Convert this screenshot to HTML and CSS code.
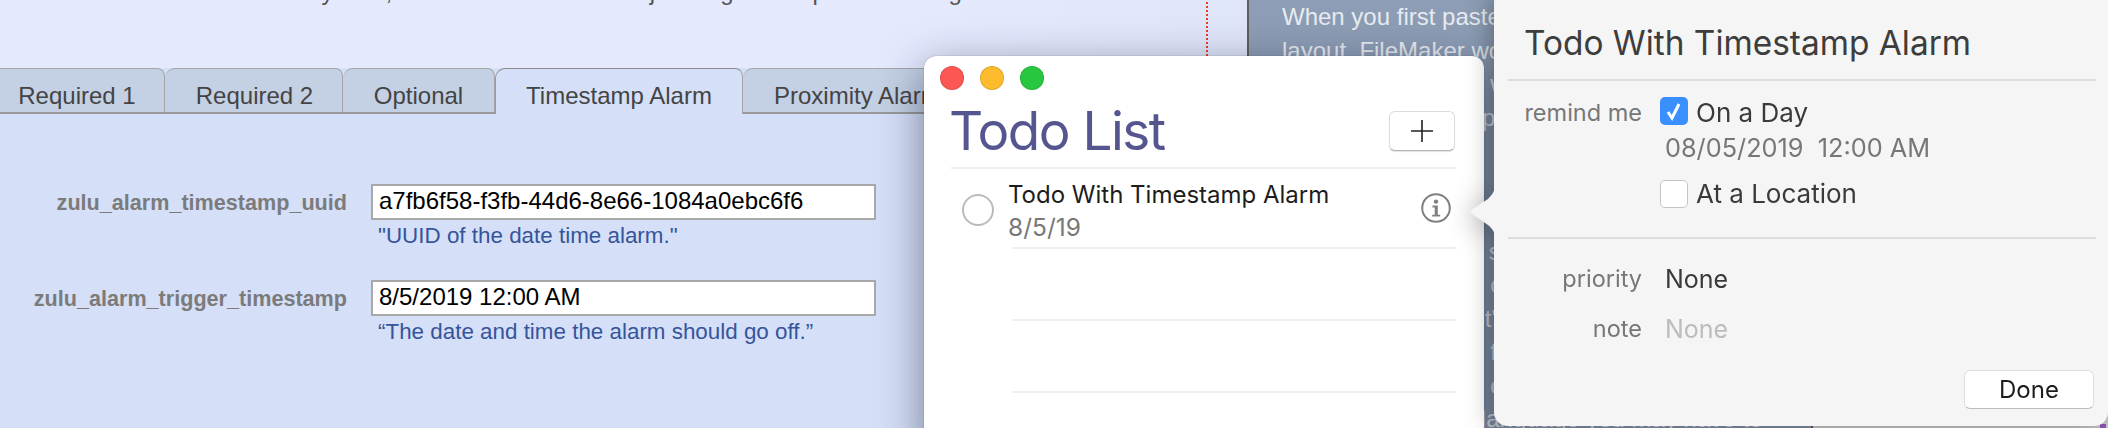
FILE: index.html
```html
<!DOCTYPE html>
<html lang="en">
<head>
<meta charset="utf-8">
<title>Todo With Timestamp Alarm</title>
<link rel="stylesheet" href="styles.css">
</head>
<body>
<div class="stage">
  <div class="doc">
    <div class="doc-top">
      <p class="intro">Fields below are used in the system, and tables for the main just to get a help from other guide</p>
      <span class="red-guide"></span>
    </div>
    <div class="tabs">
      <div class="tab tab-first">Required 1</div>
      <div class="tab tab-second">Required 2</div>
      <div class="tab tab-third">Optional</div>
      <div class="tab tab-active">Timestamp Alarm</div>
      <div class="tab tab-last">Proximity Alarm</div>
    </div>
    <div class="panel">
      <div class="field">
        <div class="field-label">zulu_alarm_timestamp_uuid</div>
        <div class="field-box">a7fb6f58-f3fb-44d6-8e66-1084a0ebc6f6</div>
        <div class="field-help">"UUID of the date time alarm."</div>
      </div>
      <div class="field">
        <div class="field-label">zulu_alarm_trigger_timestamp</div>
        <div class="field-box">8/5/2019 12:00 AM</div>
        <div class="field-help">“The date and time the alarm should go off.”</div>
      </div>
    </div>
  </div>

  <div class="side">
    <p class="side-line">When you first paste the script into your</p>
    <p class="side-line">layout, FileMaker would ask you which table</p>
    <p class="side-line">the table and fields with</p>
    <p class="side-line">it needs to show a part</p>
    <p class="side-line">of the alarm</p>
    <p class="side-line">and the list</p>
    <p class="side-line">on this page</p>
    <p class="side-line">to the table and for some</p>
    <p class="side-line">the table and fields can</p>
    <p class="side-line">those are in a script's</p>
    <p class="side-line">the table and fields for</p>
    <p class="side-line">the tables and field can</p>
    <p class="side-line">and set in another language you may have to</p>
    <span class="side-edge"></span>
    <span class="side-tail"></span>
    <span class="side-mark"></span>
  </div>

  <section class="window">
    <div class="lights">
      <span class="light light-red"></span>
      <span class="light light-yellow"></span>
      <span class="light light-green"></span>
    </div>
    <header class="win-head">
      <h1 class="win-title">Todo List</h1>
      <button class="add-btn" type="button" aria-label="Add">
        <svg class="add-icon" viewBox="0 0 22 22" width="22" height="22"><path d="M11 0v22M0 11h22" stroke="#222" stroke-width="1.6" fill="none"/></svg>
      </button>
    </header>
    <div class="todo">
      <span class="radio"></span>
      <div class="todo-text">
        <div class="todo-title">Todo With Timestamp Alarm</div>
        <div class="todo-date">8/5/19</div>
      </div>
      <svg class="info" viewBox="0 0 30 30" width="30" height="30">
        <circle cx="15" cy="15" r="13.8" fill="none" stroke="#808080" stroke-width="2"/>
        <circle cx="15" cy="8.6" r="2.2" fill="#808080"/>
        <path d="M11.5 12.6h5.3v9.2h2.4v1.8h-8v-1.8h2.5v-7.4h-2.2z" fill="#808080"/>
      </svg>
    </div>
    <div class="empty-row"></div>
    <div class="empty-row"></div>
  </section>

  <aside class="popover">
    <svg class="pop-arrow" viewBox="0 0 27 62" width="27" height="62">
      <path d="M27 0C27 9 24 14 19 19L2 30Q0 31 2 33L19 45C24 49 27 54 27 62Z" fill="#f5f5f5"/>
    </svg>
    <h2 class="pop-title">Todo With Timestamp Alarm</h2>
    <div class="pop-remind">
      <div class="pop-label">remind me</div>
      <div class="pop-options">
        <div class="check-row">
          <span class="check check-on">
            <svg viewBox="0 0 28 28" width="28" height="28"><path d="M8 15l4 6 7-14" fill="none" stroke="#fff" stroke-width="3"/></svg>
          </span>
          <span class="check-text">On a Day</span>
        </div>
        <div class="pop-date">08/05/2019&nbsp; 12:00 AM</div>
        <div class="check-row check-row-b">
          <span class="check"></span>
          <span>At a Location</span>
        </div>
      </div>
    </div>
    <div class="pop-meta">
      <div class="pop-label">priority</div>
      <div class="pop-value">None</div>
      <div class="pop-label">note</div>
      <div class="pop-value pop-value-empty">None</div>
    </div>
    <div class="pop-foot">
      <button class="done-btn" type="button">Done</button>
    </div>
  </aside>
</div>
</body>
</html>
```
FILE: styles.css
```css
* { box-sizing: border-box; }
html, body { margin: 0; padding: 0; }
body { width: 2108px; height: 428px; overflow: hidden; background: #8c9db5; }
p, h1, h2 { margin: 0; font-weight: 400; }

.stage {
  position: relative;
  display: flex;
  width: 2108px;
  height: 428px;
  overflow: hidden;
}

/* FileMaker layout, left */
.doc {
  width: 1247px;
  flex: none;
  display: flex;
  flex-direction: column;
  font-family: "Liberation Sans", sans-serif;
  background: linear-gradient(100deg, #e4e9fe 70%, #dfe5f8 100%);
  overflow: hidden;
}
.doc-top { position: relative; height: 68px; overflow: hidden; }
.intro {
  margin-top: -20px;
  padding-left: 4px;
  font-size: 24px;
  line-height: 24px;
  color: #555;
  white-space: nowrap;
}
.red-guide {
  position: absolute;
  left: 1206px;
  top: 2px;
  bottom: 0;
  border-left: 2px dotted #ee3b1c;
}
.tabs {
  display: flex;
  height: 46px;
  font-size: 24px;
  color: #444;
  background: #d5dff7;
}
.tab {
  height: 46px;
  padding-top: 13px;
  line-height: 28px;
  text-align: center;
  background: #c4d0e4;
  border: 1.5px solid #a6a6a6;
  border-bottom: 2px solid #999;
  border-left-width: 0;
  border-radius: 0 8px 0 0;
  border-top-left-radius: 10px;
  white-space: nowrap;
}
.tab-first { width: 165px; padding-right: 10px; border-top-left-radius: 0; }
.tab-second { width: 178px; padding-left: 2px; }
.tab-third { width: 152px; }
.tab-active {
  width: 248px;
  background: #d5dff7;
  border-top-color: #8c8c8c;
  border-left: 1.5px solid #999;
  border-bottom: 0;
}
.tab-last { flex: 1; text-align: left; padding-left: 31px; }

.panel {
  flex: 1;
  background: #d5dff7;
  padding-top: 70px;
}
.field {
  display: grid;
  grid-template-columns: 347px 505px;
  grid-template-rows: 36px 1fr;
  column-gap: 24px;
  height: 96px;
}
.field-label {
  text-align: right;
  font-weight: 700;
  font-size: 21.6px;
  line-height: 37px;
  color: #7b7b7b;
  white-space: nowrap;
}
.field-box {
  height: 36px;
  padding-left: 6px;
  background: #fff;
  border: 2px solid #a9a9a9;
  font-size: 24px;
  line-height: 30px;
  color: #000;
  white-space: nowrap;
}
.field-help {
  grid-column: 2;
  padding-left: 7px;
  padding-top: 2px;
  font-size: 22.4px;
  line-height: 28px;
  color: #35559a;
  white-space: nowrap;
}

/* Right-hand help panel */
.side {
  position: relative;
  flex: 1;
  padding: 0 0 0 33px;
  background: #8c9db5;
  border-left: 2px solid #5f5f5f;
  font-family: "Liberation Sans", sans-serif;
  font-size: 24px;
  line-height: 33.5px;
  color: #e8ebef;
  white-space: nowrap;
  overflow: hidden;
}
.side-edge {
  position: absolute;
  left: 562px;
  top: 0;
  bottom: 0;
  width: 2px;
  background: #5f5f5f;
}
.side-tail {
  position: absolute;
  left: 564px;
  right: 0;
  top: 0;
  bottom: 0;
  background: #dcdcdc;
}
.side-mark {
  position: absolute;
  right: 2px;
  bottom: 0;
  width: 6px;
  height: 4px;
  background: #a15ad1;
}

/* Todo List window */
.window {
  position: absolute;
  left: 924px;
  top: 56px;
  width: 560px;
  height: 400px;
  background: #fff;
  border-radius: 12px 12px 0 0;
  box-shadow: 0 12px 44px rgba(20, 28, 50, 0.5), 0 0 1px rgba(0, 0, 0, 0.5);
  font-family: Inter, "Noto Sans", sans-serif;
}
.lights { display: flex; gap: 16px; padding: 10px 0 0 16px; }
.light {
  width: 24px;
  height: 24px;
  border-radius: 50%;
  border: 1px solid rgba(0, 0, 0, 0.12);
}
.light-red { background: #fc5753; }
.light-yellow { background: #fdbc2d; }
.light-green { background: #27c83f; }
.win-head {
  display: flex;
  justify-content: space-between;
  align-items: flex-start;
  height: 79px;
  margin: 0 28px 0 27px;
  padding-top: 11px;
  border-bottom: 2px solid #eeeeee;
}
.win-title {
  margin-left: -2px;
  font-size: 53px;
  line-height: 60px;
  letter-spacing: -1.5px;
  color: #55568f;
}
.add-btn {
  display: flex;
  align-items: center;
  justify-content: center;
  width: 66px;
  height: 40px;
  margin: 10px 1px 0 0;
  padding: 0;
  background: #fff;
  border: 1px solid #dcdcdc;
  border-bottom-color: #b5b5b5;
  border-radius: 6px;
  box-shadow: 0 1px 1px rgba(0, 0, 0, 0.12);
}
.add-icon { display: block; }
.todo {
  position: relative;
  display: flex;
  height: 80px;
  margin-right: 28px;
  padding-left: 38px;
}
.todo::after, .empty-row::after {
  content: "";
  position: absolute;
  left: 88px;
  right: 0;
  bottom: 0;
  height: 2px;
  background: #eeeeee;
}
.radio {
  width: 32px;
  height: 32px;
  margin-top: 25px;
  border: 2px solid #bbbbbb;
  border-radius: 50%;
  flex: none;
}
.todo-text { margin-left: 14px; padding-top: 10px; flex: 1; }
.todo-title {
  font-size: 24px;
  line-height: 32px;
  color: #1d1d1d;
  white-space: nowrap;
}
.todo-date {
  font-size: 24.5px;
  line-height: 32px;
  color: #787878;
}
.info { margin: 24px 5px 0 0; flex: none; }
.empty-row { position: relative; height: 72px; margin-right: 28px; }

/* Popover */
.popover {
  position: absolute;
  left: 1494px;
  top: -12px;
  right: 0;
  height: 438px;
  background: #f5f5f5;
  border-radius: 14px;
  filter: drop-shadow(0 4px 14px rgba(0, 0, 0, 0.4));
  font-family: Inter, "Noto Sans", sans-serif;
  color: #3a3a3a;
}
.pop-arrow {
  position: absolute;
  left: -25px;
  top: 192px;
  display: block;
}
.pop-title {
  height: 93px;
  margin: 0 12px 0 14px;
  padding: 36px 0 0 16px;
  border-bottom: 2px solid #dddddd;
  font-size: 33.4px;
  line-height: 38px;
  color: #3d3d3d;
  white-space: nowrap;
}
.pop-remind {
  display: grid;
  grid-template-columns: 134px 1fr;
  column-gap: 18px;
  height: 158px;
  margin: 0 12px 0 14px;
  padding-top: 16px;
  border-bottom: 2px solid #dddddd;
}
.pop-label {
  font-size: 23.5px;
  line-height: 32px;
  text-align: right;
  color: #777;
  white-space: nowrap;
}
.check-row {
  display: flex;
  align-items: center;
  gap: 8px;
  height: 28px;
  font-size: 26px;
  line-height: 28px;
  color: #3a3a3a;
}
.check-text { padding-top: 3px; }
.check-row-b { margin-top: 16px; }
.check {
  width: 28px;
  height: 28px;
  flex: none;
  background: #fff;
  border: 1px solid #c4c4c4;
  border-radius: 5px;
}
.check-on { background: #3a8ffe; border: 0; }
.check-on svg { display: block; }
.pop-date {
  margin: 6px 0 0 5px;
  height: 33px;
  font-size: 25.3px;
  line-height: 33px;
  color: #777;
  white-space: nowrap;
}
.pop-meta {
  display: grid;
  grid-template-columns: 148px 1fr;
  column-gap: 23px;
  row-gap: 18px;
  padding-top: 24px;
}
.pop-value { font-size: 25px; line-height: 32px; color: #3a3a3a; }
.pop-value-empty { color: #bcbcbc; }
.pop-foot {
  display: flex;
  justify-content: flex-end;
  margin-top: 25px;
  padding-right: 14px;
}
.done-btn {
  width: 130px;
  height: 39px;
  padding: 0;
  background: #fff;
  border: 1px solid #dedede;
  border-bottom-color: #bdbdbd;
  border-radius: 6px;
  font-family: Inter, "Noto Sans", sans-serif;
  font-size: 24px;
  color: #1d1d1d;
}
```
